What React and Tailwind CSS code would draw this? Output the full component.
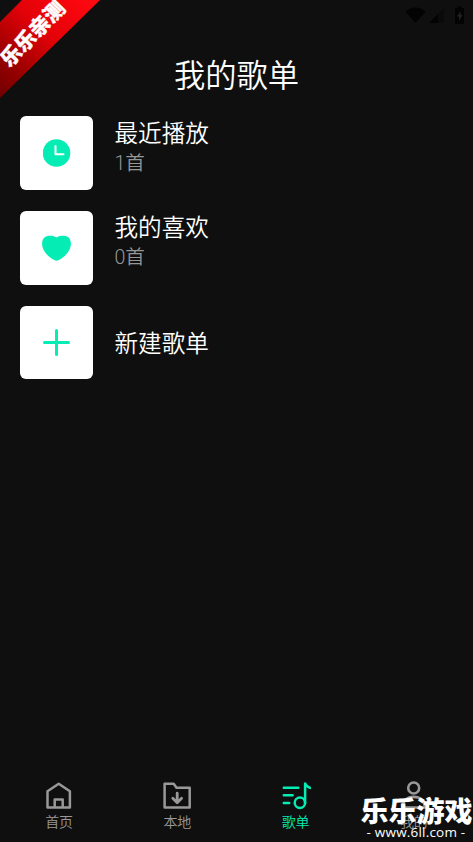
const ACCENT = "#05edb5";

function ClockIcon() {
    return (
        <svg width="28" height="28" viewBox="0 0 28 28" fill="none">
            <circle cx="13.500" cy="14" r="13.800" fill={ACCENT} />
            <path d="M12.500 7v8.2h8" stroke="white" strokeWidth="2" strokeLinecap="round" strokeLinejoin="round" />
        </svg>
    );
}

function HeartIcon() {
    return (
        <svg width="30" height="26" viewBox="0 0 30 26" fill={ACCENT}>
            <path d="M14.500 2.600C12.300.6 8.600.3 5.300 1 1.900 1.800.1 5 .1 8.800c0 7.600 7.100 13.600 12.100 16.300q2.300 1.300 4.600 0c5-2.700 12.100-8.700 12.100-16.300C28.900 5 27.100 1.800 23.700 1 20.400.3 16.700.6 14.500 2.600z" />
        </svg>
    );
}

function PlusIcon() {
    return (
        <svg width="27" height="27" viewBox="0 0 27 27" stroke={ACCENT} strokeWidth="3" strokeLinecap="round">
            <path d="M13.500 1.500v24M1.500 13.500h24" />
        </svg>
    );
}

function HomeIcon() {
    return (
        <svg width="30" height="30" viewBox="0 0 30 30" fill="none" stroke="currentColor" strokeWidth="2.500" strokeLinejoin="round">
            <path d="M3.500 11.300 14.700 3.800l11.200 7.500v16.200H3.500z" />
            <path d="M10.700 27v-7.500h8V27" />
        </svg>
    );
}

function FolderIcon() {
    return (
        <svg width="30" height="30" viewBox="0 0 30 30" fill="none" stroke="currentColor" strokeWidth="2.500" strokeLinejoin="round" strokeLinecap="round">
            <path d="M2.600 3.800h9.100l2.800 4h13.200v19.700H2.600z" />
            <path d="M15.200 13.200v9M10.800 18.300l4.400 4.400 4.400-4.400" strokeWidth="2.800" />
        </svg>
    );
}

function MusicIcon() {
    return (
        <svg width="30" height="30" viewBox="0 0 30 30" fill="none" stroke="currentColor" strokeWidth="2.500" strokeLinecap="round" strokeLinejoin="round">
            <path d="M2.800 7.700h14.500M2.800 15.300h8.800M2.800 23h5.400" />
            <circle cx="18.900" cy="22.800" r="5.200" />
            <path d="M24.100 22.800V3.400c.8 2.600 3.200 3.700 5 4.500" />
        </svg>
    );
}

function UserIcon() {
    return (
        <svg width="30" height="30" viewBox="0 0 30 30" fill="none" stroke="currentColor" strokeWidth="2.600" strokeLinecap="round">
            <circle cx="14.700" cy="8" r="5.500" />
            <path d="M3.500 27.500c0-6.600 4.800-10.600 11.200-10.600s11.200 4 11.200 10.600z" />
        </svg>
    );
}

function StatusIcons() {
    return (
        <svg className="absolute top-0 right-0" width="80" height="32" viewBox="0 0 80 32">
            <path d="M12.500 11.500Q22.500 3.500 32.500 11.500L22.500 23z" fill="#030303" />
            <path d="M36 23 51 8v15z" fill="#0a0a0a" />
            <path d="M36 23 45 14v9z" fill="#030303" />
            <path d="M62 8h2.500V6.500h4V8H71v16h-9z" fill="#030303" />
            <path d="m67.500 11-3.500 5.500h2v4.500l3.500-6h-2z" fill="#222222" />
        </svg>
    );
}

const playlists = [
    { name: "最近播放", count: "1首", icon: <ClockIcon /> },
    { name: "我的喜欢", count: "0首", icon: <HeartIcon /> },
    { name: "新建歌单", icon: <PlusIcon /> },
];

const tabs = [
    { name: "首页", icon: <HomeIcon /> },
    { name: "本地", icon: <FolderIcon /> },
    { name: "歌单", icon: <MusicIcon />, active: true },
    { name: "我的", icon: <UserIcon /> },
];

function PlaylistRow({ item }) {
    return (
        <div className="flex h-[73.6px] gap-[21.5px]">
            <div className="flex w-[73px] shrink-0 items-center justify-center rounded-[6px] bg-white">
                {item.icon}
            </div>
            <div className={item.count ? "pt-[2.4px]" : "self-center pt-[2px]"}>
                <p className="text-[23.6px] leading-[30px] text-white">{item.name}</p>
                {item.count && <p className="text-[19.6px] leading-[29px] text-[#969696]">{item.count}</p>}
            </div>
        </div>
    );
}

function Ribbon() {
    return (
        <div className="absolute top-0 left-0 h-[102px] w-[102px]">
            <svg className="absolute inset-0" width="102" height="102" viewBox="0 0 102 102">
                <defs>
                    <linearGradient id="ribbon" x1="0" y1="98" x2="90" y2="0" gradientUnits="userSpaceOnUse">
                        <stop offset="0" stopColor="#700000" />
                        <stop offset="0.25" stopColor="#990000" />
                        <stop offset="0.6" stopColor="#e30208" />
                        <stop offset="1" stopColor="#ff0810" />
                    </linearGradient>
                </defs>
                <path d="M22 0h78L0 98V22z" fill="url(#ribbon)" />
            </svg>
            <span className="absolute top-[19px] left-[-9px] w-[84px] -rotate-[46deg] text-center text-[20.5px] leading-[30px] font-black whitespace-nowrap text-white [-webkit-text-stroke:0.4px_white]">
                乐乐亲测
            </span>
        </div>
    );
}

function Watermark() {
    return (
        <div className="absolute right-0 bottom-0 w-[114px] text-center text-white">
            <p className="pl-px text-[28px] leading-[21px] font-black whitespace-nowrap">乐乐游戏</p>
            <p className="font-['Open_Sans',sans-serif] text-[13.5px] leading-[19px] font-normal tracking-[0.2px] whitespace-nowrap">- www.6ll.com -</p>
        </div>
    );
}

export default function App() {
    return (
        <div className="relative flex h-screen w-full flex-col overflow-hidden bg-[#0f0f0f] font-[Roboto,'Noto_Sans_CJK_SC',sans-serif] font-[350]">
            <StatusIcons />

            <h1 className="pt-[55px] text-center text-[31.3px] leading-[43px] font-[350] text-white">我的歌单</h1>

            <main className="flex flex-1 flex-col gap-[21.2px] px-5 pt-[18.2px]">
                {playlists.map((item) => (
                    <PlaylistRow key={item.name} item={item} />
                ))}
            </main>

            <nav className="grid h-[62px] grid-cols-4">
                {tabs.map((tab) => (
                    <div
                        key={tab.name}
                        className={`flex flex-col items-center ${tab.active ? "text-[#05edb5]" : "text-[#999999]"}`}
                    >
                        {tab.icon}
                        <span className="pt-[2px] text-[14px] leading-[20px]">{tab.name}</span>
                    </div>
                ))}
            </nav>

            <Ribbon />
            <Watermark />
        </div>
    );
}
